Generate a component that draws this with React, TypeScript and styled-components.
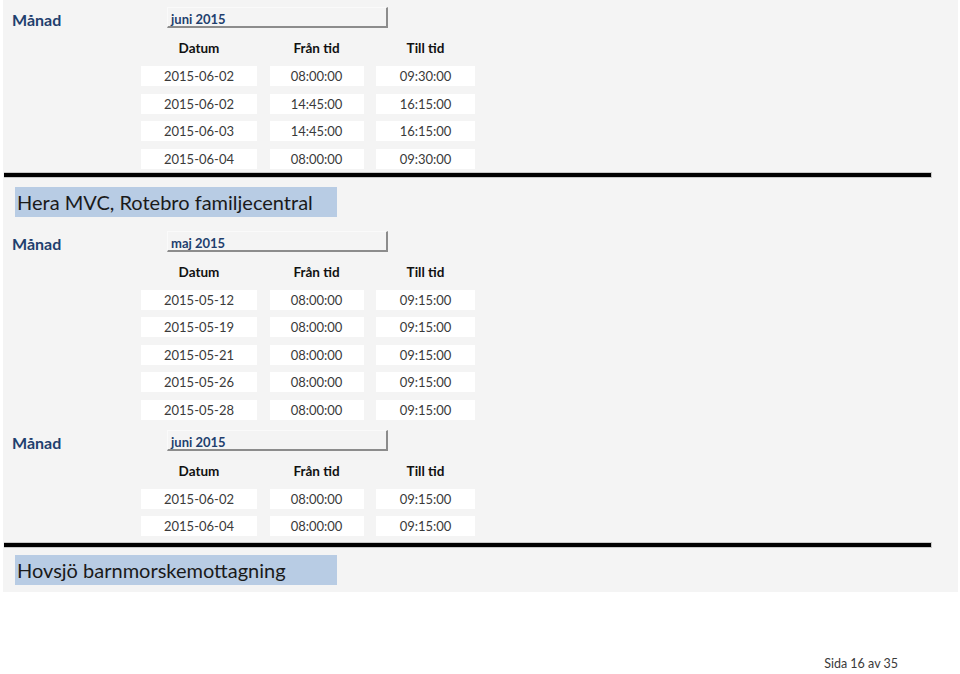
import React from "react";
import styled, { createGlobalStyle } from "styled-components";

const Global = createGlobalStyle`
  html, body { margin: 0; padding: 0; background: #ffffff; }
  body { font-family: Lato, "Open Sans", "Liberation Sans", sans-serif; }
`;

const Page = styled.div`
  width: 960px;
  display: flex;
  flex-direction: column;
`;

const Panel = styled.div`
  width: 955px;
  margin-left: 3px;
  background: #f4f4f4;
  padding: 7px 0 7px 0;
  display: flex;
  flex-direction: column;
`;

const MonthBlock = styled.div<{ $top: number }>`
  display: flex;
  flex-direction: column;
  margin-top: ${(p) => p.$top}px;
`;

const MonthRow = styled.div`
  display: flex;
  align-items: center;
  height: 21px;
`;

const MonthLabel = styled.div`
  width: 155px;
  padding-left: 9px;
  font-weight: 700;
  font-size: 16px;
  color: #1f3f6e;
  line-height: 21px;
  padding-top: 4px;
`;

const Selector = styled.div`
  box-sizing: border-box;
  height: 21px;
  width: 221px;
  border-right: 2px solid #8c8c8c;
  border-bottom: 2px solid #8c8c8c;
  border-top: 1px solid #fafafa;
  border-left: 1px solid #fafafa;
  padding-left: 3px;
  padding-bottom: 0;
  font-weight: 700;
  font-size: 13px;
  color: #1f3f6e;
  display: flex;
  align-items: flex-end;
  line-height: 14px;
`;

const Grid = styled.div`
  display: grid;
  grid-template-columns: 116px 94px 99px;
  column-gap: 12.5px;
  margin-left: 138px;
`;

const HeaderRow = styled(Grid)`
  margin-top: 10px;
  height: 20px;
  align-items: center;
`;

const HeadCell = styled.div`
  text-align: center;
  font-weight: 700;
  font-size: 13.5px;
  color: #111;
`;

const Rows = styled.div`
  display: flex;
  flex-direction: column;
  gap: 7.5px;
  margin-top: 8px;
`;

const DataRow = styled(Grid)``;

const Cell = styled.div`
  height: 20px;
  background: #ffffff;
  text-align: center;
  line-height: 20px;
  font-size: 13px;
  color: #3a3a3a;
`;

const Bar = styled.div<{ $top: number }>`
  margin-top: ${(p) => p.$top}px;
  margin-left: 1px;
  width: 927px;
  height: 4px;
  background: #000;
  border: 1px solid #c8c8c8;
  border-left: none;
`;

const SiteTitle = styled.div<{ $top: number }>`
  margin-top: ${(p) => p.$top}px;
  margin-left: 12px;
  width: 322px;
  height: 30px;
  background: #b8cce4;
  display: flex;
  align-items: center;
  padding-left: 2px;
  box-sizing: border-box;
  font-size: 20px;
  color: #1a1a1a;
  line-height: 30px;
  white-space: nowrap;
`;

const Footer = styled.div`
  margin-top: 60px;
  height: 22px;
  display: flex;
  justify-content: flex-end;
  align-items: center;
  padding-right: 62px;
  font-size: 12.5px;
  color: #3a3a3a;
`;

type Entry = [string, string, string];

type Month = { name: string; rows: Entry[] };

const Block: React.FC<{ month: Month; top: number }> = ({ month, top }) => (
  <MonthBlock $top={top}>
    <MonthRow>
      <MonthLabel>Månad</MonthLabel>
      <Selector>{month.name}</Selector>
    </MonthRow>
    <HeaderRow>
      <HeadCell>Datum</HeadCell>
      <HeadCell>Från tid</HeadCell>
      <HeadCell>Till tid</HeadCell>
    </HeaderRow>
    <Rows>
      {month.rows.map((r, i) => (
        <DataRow key={i}>
          <Cell>{r[0]}</Cell>
          <Cell>{r[1]}</Cell>
          <Cell>{r[2]}</Cell>
        </DataRow>
      ))}
    </Rows>
  </MonthBlock>
);

const june1: Month = {
  name: "juni 2015",
  rows: [
    ["2015-06-02", "08:00:00", "09:30:00"],
    ["2015-06-02", "14:45:00", "16:15:00"],
    ["2015-06-03", "14:45:00", "16:15:00"],
    ["2015-06-04", "08:00:00", "09:30:00"],
  ],
};

const may: Month = {
  name: "maj 2015",
  rows: [
    ["2015-05-12", "08:00:00", "09:15:00"],
    ["2015-05-19", "08:00:00", "09:15:00"],
    ["2015-05-21", "08:00:00", "09:15:00"],
    ["2015-05-26", "08:00:00", "09:15:00"],
    ["2015-05-28", "08:00:00", "09:15:00"],
  ],
};

const june2: Month = {
  name: "juni 2015",
  rows: [
    ["2015-06-02", "08:00:00", "09:15:00"],
    ["2015-06-04", "08:00:00", "09:15:00"],
  ],
};

export default function App() {
  return (
    <Page>
      <Global />
      <Panel>
        <Block month={june1} top={0} />
        <Bar $top={3} />
        <SiteTitle $top={9}>Hera MVC, Rotebro familjecentral</SiteTitle>
        <Block month={may} top={14} />
        <Block month={june2} top={10} />
        <Bar $top={6} />
        <SiteTitle $top={7}>Hovsjö barnmorskemottagning</SiteTitle>
      </Panel>
      <Footer>Sida 16 av 35</Footer>
    </Page>
  );
}
